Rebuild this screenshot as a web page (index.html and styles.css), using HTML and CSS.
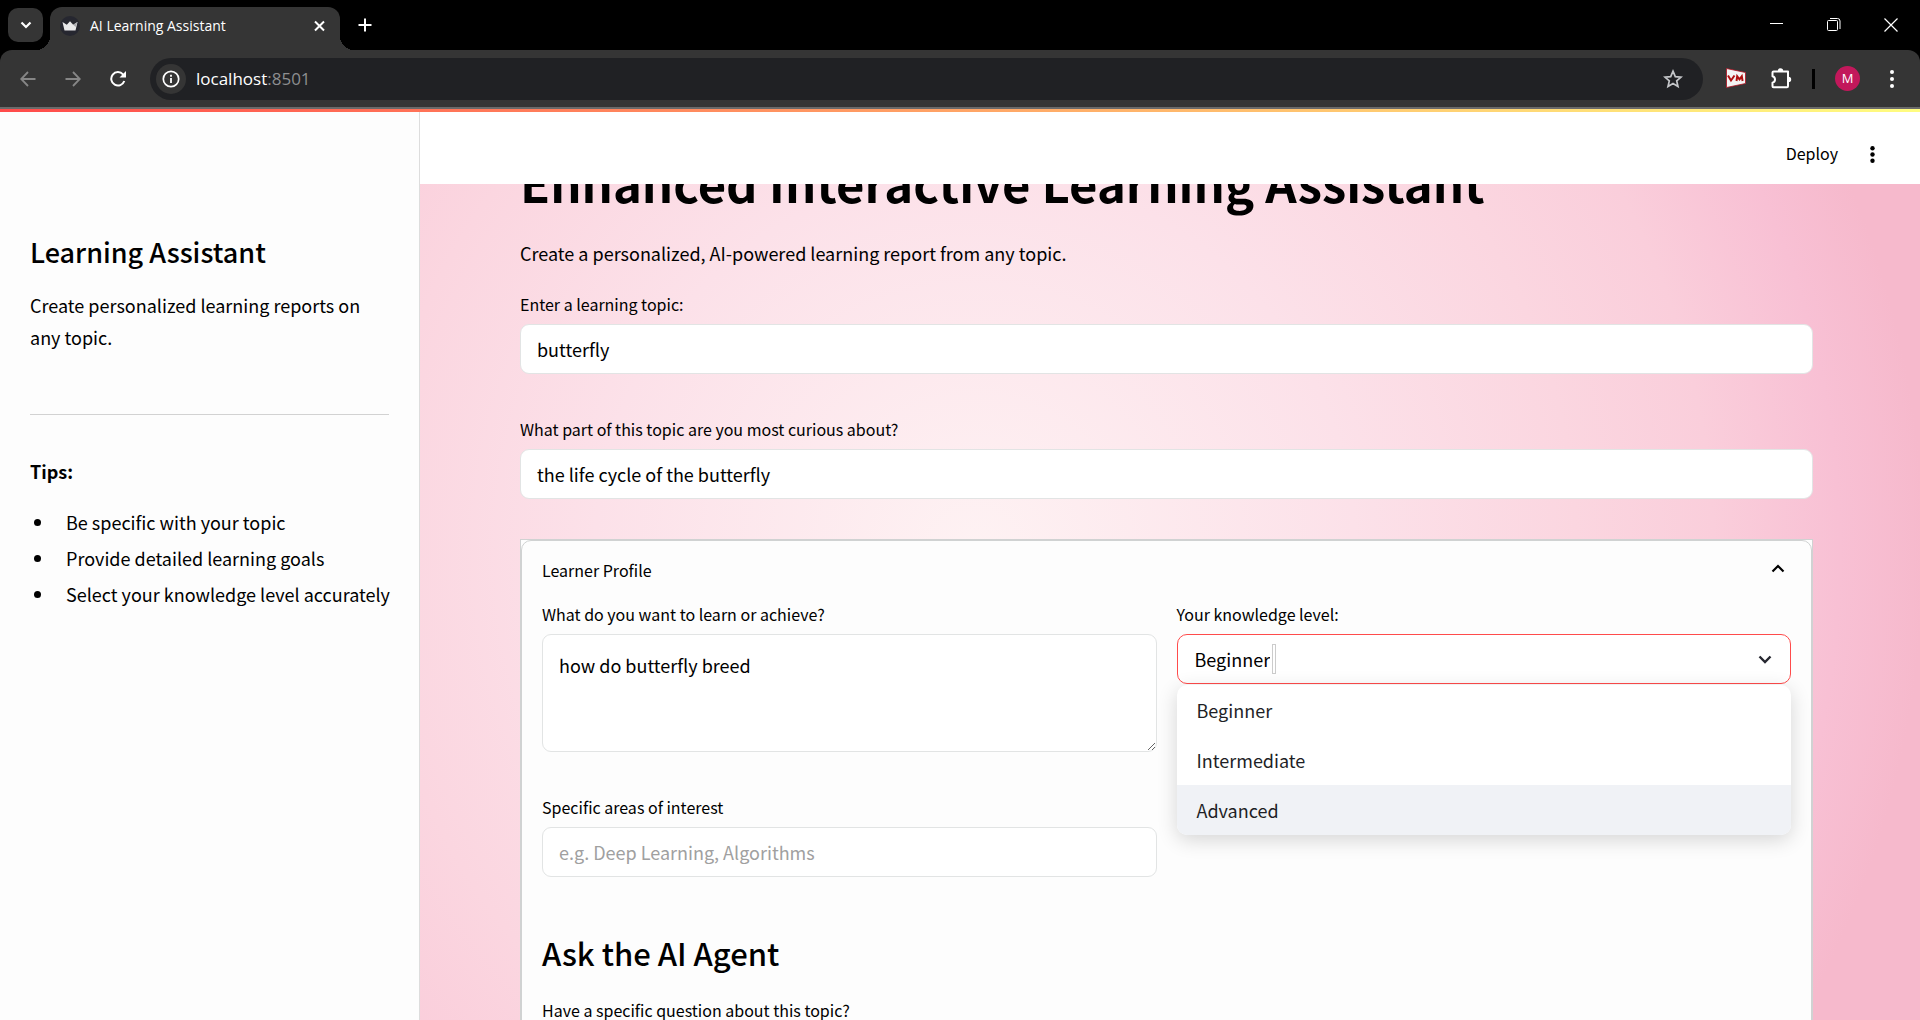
FILE: index.html
```html
<!DOCTYPE html>
<html lang="en">
<head>
<meta charset="utf-8">
<title>AI Learning Assistant</title>
<link rel="stylesheet" href="styles.css">
</head>
<body>
<div class="browser">
  <div class="tabstrip">
    <button class="tab-search" aria-label="Search tabs"><svg width="12" height="8" viewBox="0 0 12 8"><path d="M1.5 1.5 6 6l4.500-4.500" fill="none" stroke="#fff" stroke-width="2.200"/></svg></button>
    <div class="tab">
      <svg class="favicon" width="20" height="20" viewBox="0 0 20 20"><circle cx="10" cy="10" r="10" fill="#262730"/><path d="M2.500 6 6.800 8.700 10 5.300l3.200 3.400L17.500 6 15.500 14.500h-11z" fill="#e8e8ea"/><path d="M10 5.300l3.200 3.400L17.500 6 15.500 11z" fill="#a9a9ae"/></svg>
      <span class="tab-title">AI Learning Assistant</span>
      <button class="bare" aria-label="Close tab"><svg width="11" height="12" viewBox="0 0 11 12"><path d="M1 1.500 10 10.500M10 1.500 1 10.500" stroke="#fff" stroke-width="2"/></svg></button>
    </div>
    <button class="bare new-tab" aria-label="New tab"><svg width="14" height="14" viewBox="0 0 14 14"><path d="M7 .5v13M.5 7h13" stroke="#fff" stroke-width="2"/></svg></button>
    <div class="window-controls">
      <button class="bare" aria-label="Minimize"><svg width="14" height="14" viewBox="0 0 14 14"><path d="M0 5.500h13" stroke="#fff"/></svg></button>
      <button class="bare" aria-label="Restore"><svg width="14" height="14" viewBox="0 0 14 14"><path d="M.5 3.500q0-1 1-1h8q1 0 1 1v8q0 1-1 1h-8q-1 0-1-1zM3 .5h7.500q2.500 0 2.500 2.500v8" fill="none" stroke="#fff"/></svg></button>
      <button class="bare" aria-label="Close"><svg width="14" height="14" viewBox="0 0 14 14"><path d="M.5.500 13.500 13.500M13.500.500.5 13.500" stroke="#fff" stroke-width="1.200"/></svg></button>
    </div>
  </div>
  <div class="toolbar">
    <button class="bare" aria-label="Back"><svg width="16" height="16" viewBox="0 0 16 16"><path d="M15.500 8H1.500M8 1 1.200 8 8 15" fill="none" stroke="#868686" stroke-width="1.800"/></svg></button>
    <button class="bare" aria-label="Forward"><svg width="16" height="16" viewBox="0 0 16 16"><path d="M.5 8h14M8 1l6.800 7L8 15" fill="none" stroke="#868686" stroke-width="1.800"/></svg></button>
    <button class="bare" aria-label="Reload"><svg width="16" height="16" viewBox="0 0 16 16"><path d="M14.300 10A6.700 6.700 0 1 1 13 3.400L14.500 5" fill="none" stroke="#fff" stroke-width="2"/><path d="M16 0v6.500H9.500z" fill="#fff"/></svg></button>
    <div class="omnibox">
      <span class="site-info"><svg width="18" height="18" viewBox="0 0 18 18"><circle cx="9" cy="9" r="7.700" fill="none" stroke="#fff" stroke-width="1.700"/><path d="M9 8v5M9 4.800v1.900" stroke="#fff" stroke-width="1.800"/></svg></span>
      <span class="url">localhost<span class="port">:8501</span></span>
      <button class="bare" aria-label="Bookmark"><svg width="20" height="20" viewBox="0 0 20 20"><path d="M10 2.200 12.300 7.600l5.800.5-4.400 3.800 1.300 5.700-5-3-5 3 1.300-5.700L1.900 8.100l5.800-.5z" fill="none" stroke="#c4c6c9" stroke-width="1.700"/></svg></button>
    </div>
    <div class="extensions">
      <svg width="20" height="20" viewBox="0 0 20 20" role="img" aria-label="VM"><path d="M.5.500 19.500 4.500v11L.5 19.500z" fill="#f4f4f4" stroke="#b01020" stroke-width=".8"/><path d="M2 7.500 5 12.500 8.500 7.500M10.500 13l.7-4.700 2.300 3 2.300-3 .8 4.700" fill="none" stroke="#b01010" stroke-width="2"/></svg>
      <svg width="21" height="21" viewBox="0 0 21 21"><path d="M2.500 3.500h14.500v14.800q0 1-1 1H2.500q-1 0-1-1v-3.600a3.300 3.300 0 0 0 0-6.400V4.500q0-1 1-1z" fill="none" stroke="#fff" stroke-width="2" stroke-linejoin="round"/><path d="M6.800 3a2.700 2.700 0 0 1 5.400 0zM17.500 8.700a2.700 2.700 0 0 1 0 5.400z" fill="#fff"/></svg>
    </div>
    <span class="divider"></span>
    <span class="avatar">M</span>
    <button class="bare" aria-label="Menu"><svg width="4" height="18" viewBox="0 0 4 18" fill="#fff"><circle cx="2" cy="2" r="2"/><circle cx="2" cy="9" r="2"/><circle cx="2" cy="16" r="2"/></svg></button>
  </div>
</div>
<div class="decoration"></div>
<div class="app">
  <aside class="sidebar">
    <h2 class="side-title">Learning Assistant</h2>
    <p>Create personalized learning reports on any topic.</p>
    <hr class="rule">
    <p><strong>Tips:</strong></p>
    <ul class="tips">
      <li>Be specific with your topic</li>
      <li>Provide detailed learning goals</li>
      <li>Select your knowledge level accurately</li>
    </ul>
  </aside>
  <div class="page">
    <header class="header">
      <button class="bare deploy">Deploy</button>
      <button class="bare" aria-label="Main menu"><svg width="5" height="17" viewBox="0 0 5 17" fill="#000"><circle cx="2.500" cy="2.300" r="2.200"/><circle cx="2.500" cy="8.500" r="2.200"/><circle cx="2.500" cy="14.700" r="2.200"/></svg></button>
    </header>
    <main class="main">
      <div class="content">
        <h1 class="title">Enhanced Interactive Learning Assistant</h1>
        <p class="lead">Create a personalized, AI-powered learning report from any topic.</p>
        <div class="field">
          <label for="topic">Enter a learning topic:</label>
          <input class="control" id="topic" type="text" value="butterfly">
        </div>
        <div class="field">
          <label for="part">What part of this topic are you most curious about?</label>
          <input class="control" id="part" type="text" value="the life cycle of the butterfly">
        </div>
        <section class="expander">
          <div class="expander-inner">
            <button class="bare summary"><span>Learner Profile</span><svg width="14" height="9" viewBox="0 0 14 9"><path d="M1.500 7.500 7 2l5.500 5.500" fill="none" stroke="#000" stroke-width="2.200"/></svg></button>
            <div class="columns">
              <div class="column">
                <div class="field">
                  <label for="goal">What do you want to learn or achieve?</label>
                  <textarea class="control area" id="goal">how do butterfly breed</textarea>
                </div>
                <div class="field">
                  <label for="areas">Specific areas of interest</label>
                  <input class="control" id="areas" type="text" placeholder="e.g. Deep Learning, Algorithms">
                </div>
              </div>
              <div class="column">
                <div class="field">
                  <label for="level">Your knowledge level:</label>
                  <div class="combo">
                    <select id="level"><option>Beginner</option><option>Intermediate</option><option>Advanced</option></select>
                    <span class="caret"></span>
                    <svg class="chevron" width="14" height="9" viewBox="0 0 14 9"><path d="M1.500 1.500 7 7l5.500-5.500" fill="none" stroke="#262730" stroke-width="2.400"/></svg>
                    <ul class="menu" role="listbox">
                      <li role="option">Beginner</li>
                      <li role="option">Intermediate</li>
                      <li role="option" class="active">Advanced</li>
                    </ul>
                  </div>
                </div>
              </div>
            </div>
            <h2 class="ask">Ask the AI Agent</h2>
            <div class="field">
              <label for="question">Have a specific question about this topic?</label>
              <input class="control" id="question" type="text">
            </div>
          </div>
        </section>
      </div>
    </main>
  </div>
</div>
</body>
</html>
```
FILE: styles.css
```css
* { box-sizing: border-box; }

body {
  margin: 0;
  height: 100vh;
  overflow: hidden;
  display: flex;
  flex-direction: column;
  font-family: "Noto Sans CJK SC", "Noto Sans", sans-serif;
  font-size: 18px;
  line-height: 32px;
  color: #000;
}

h1, h2, p, ul { margin: 0; padding: 0; }

svg { display: block; flex: none; }

button, input, textarea, select {
  font: inherit;
  color: inherit;
}

.bare {
  display: flex;
  align-items: center;
  padding: 0;
  border: 0;
  background: none;
}

/* Browser window */
.browser {
  flex: none;
  font-family: "Open Sans", "Noto Sans", sans-serif;
  background: #000;
  color: #fff;
  border-bottom: 2px solid #6a6a6a;
}

.tabstrip {
  display: flex;
  align-items: center;
  height: 50px;
  padding-left: 8px;
}

.tab-search {
  display: grid;
  place-items: center;
  width: 35px;
  height: 34px;
  padding: 0;
  border: 0;
  border-radius: 10px;
  background: #353535;
}

.tab {
  position: relative;
  align-self: flex-end;
  display: flex;
  align-items: center;
  gap: 10px;
  width: 290px;
  height: 43px;
  margin-left: 7px;
  padding: 0 15px 6px 10px;
  border-radius: 12px 12px 0 0;
  background: #353535;
}

.tab::before,
.tab::after {
  content: "";
  position: absolute;
  bottom: 0;
  width: 14px;
  height: 14px;
}

.tab::before {
  right: 100%;
  background: radial-gradient(circle at 0 0, transparent 14px, #353535 14px);
}

.tab::after {
  left: 100%;
  background: radial-gradient(circle at 100% 0, transparent 14px, #353535 14px);
}

.tab-title {
  flex: 1;
  font-size: 14px;
  line-height: 20px;
}

.new-tab { margin-left: 18px; }

.window-controls {
  display: flex;
  gap: 43px;
  margin-left: auto;
  padding-right: 22px;
}

.toolbar {
  display: flex;
  align-items: center;
  height: 57px;
  padding: 0 26px 0 20px;
  border-radius: 12px 12px 0 0;
  background: #353535;
}

.toolbar > .bare + .bare { margin-left: 29px; }

.omnibox {
  flex: 1;
  display: flex;
  align-items: center;
  height: 42px;
  margin-left: 24px;
  margin-right: 23px;
  padding: 0 20px 0 6px;
  border-radius: 21px;
  background: #202124;
}

.site-info {
  display: grid;
  place-items: center;
  width: 30px;
  height: 30px;
  border-radius: 50%;
  background: #353535;
}

.url {
  flex: 1;
  margin-left: 10px;
  font-size: 17px;
  line-height: 24px;
}

.port { color: #8d8e90; }

.extensions {
  display: flex;
  gap: 25px;
  margin-right: 20px;
}

.divider {
  width: 3px;
  height: 20px;
  margin-right: 20px;
  background: #000;
}

.avatar {
  width: 25px;
  height: 25px;
  margin-right: 30px;
  border-radius: 50%;
  background: #c2185b;
  font-size: 13px;
  line-height: 25px;
  text-align: center;
}

/* Page */
.decoration {
  flex: none;
  height: 3px;
  background: linear-gradient(90deg, #ff4b4b, #fffd80);
}

.app {
  flex: 1;
  min-height: 0;
  display: flex;
}

.sidebar {
  flex: none;
  width: 420px;
  padding: 119px 30px 0;
  border-right: 1px solid #ddd;
  background: #fdfdfd;
}

.side-title {
  margin-bottom: 16px;
  font-size: 27px;
  font-weight: 500;
  line-height: 42px;
}

.rule {
  height: 1px;
  margin: 61px 0 40px;
  border: 0;
  background: #d2d2d2;
}

.tips {
  margin-top: 17px;
  padding-left: 4px;
  line-height: 36px;
  list-style: none;
}

.tips li {
  display: flex;
  align-items: center;
  gap: 25px;
  white-space: nowrap;
}

.tips li::before {
  content: "";
  flex: none;
  width: 7px;
  height: 7px;
  border-radius: 50%;
  background: #000;
}

.page {
  flex: 1;
  min-width: 0;
  display: flex;
  flex-direction: column;
}

.header {
  flex: none;
  display: flex;
  align-items: center;
  justify-content: flex-end;
  gap: 32px;
  height: 72px;
  padding: 12px 45px 0 0;
  background: #fff;
}

.deploy { font-size: 16px; line-height: 24px; padding-bottom: 2px; }

.main {
  flex: 1;
  min-height: 0;
  overflow: hidden;
  padding: 0 107px 0 100px;
  background: radial-gradient(circle at 37% 44%, #fef2f3 0, #fce1e9 36%, #fbd6e0 57%, #facedb 70%, #f8c0d4 82%, #f6b9cc 90%);
}

/* The page is scrolled, so the title starts above the visible area */
.content { margin-top: -35px; }

.title {
  font-size: 49px;
  font-weight: 700;
  line-height: 66px;
}

.lead { margin: 22px 0 20px; }

.field {
  display: flex;
  flex-direction: column;
}

.field + .field { margin-top: 40px; }

label {
  margin-bottom: 5px;
  font-size: 16px;
  line-height: 30px;
}

.control {
  width: 100%;
  height: 50px;
  padding: 0 16px;
  border: 1px solid #e2e4e4;
  border-radius: 9px;
  outline: 0;
  background: #fff;
}

.control::placeholder { color: #a0a0a0; opacity: 1; }

.area {
  height: 118px;
  padding: 14px 16px;
  resize: vertical;
}

.expander {
  margin-top: 40px;
  border: 1px solid #d0d2d2;
  background: #fdfdfd;
}

.expander-inner {
  padding: 0 20px 40px;
  border: 1px solid #d0d2d2;
  border-radius: 10px;
}

.summary {
  justify-content: space-between;
  width: 100%;
  padding: 14px 6px 14px 0;
  font-size: 16px;
  line-height: 30px;
}

.summary svg { margin-bottom: 4px; }

.columns {
  display: grid;
  grid-template-columns: 1fr 1fr;
  gap: 20px;
}

.combo {
  position: relative;
  display: flex;
  align-items: center;
  height: 50px;
  padding: 0 18px 0 17px;
  border: 1px solid #ff4b4b;
  border-radius: 10px;
  background: #fff;
}

.combo select {
  field-sizing: content;
  padding: 0;
  border: 0;
  outline: 0;
  background: none;
  appearance: none;
}

.caret {
  width: 4px;
  height: 30px;
  margin-left: 2px;
  border: 1px solid #ccc;
}

.chevron { margin-left: auto; }

.menu {
  position: absolute;
  top: 50px;
  left: -1px;
  right: -1px;
  overflow: hidden;
  border-radius: 10px;
  background: #fff;
  box-shadow: 0 5px 20px rgba(0, 0, 0, .16);
  color: #1e1f26;
  line-height: 50px;
  list-style: none;
}

.menu li { padding-left: 20px; }

.menu .active { background: #f0f2f6; }

.ask {
  margin: 51px 0 17px;
  font-size: 31px;
  font-weight: 500;
  line-height: 50px;
}
```
